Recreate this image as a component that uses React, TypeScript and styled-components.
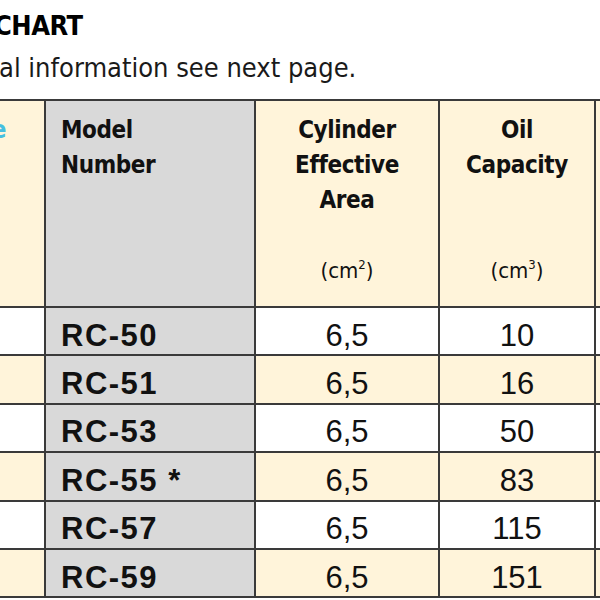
import React from "react"
import styled, { createGlobalStyle } from "styled-components"

const rows = [
    { model: "RC-50", area: "6,5", oil: "10" },
    { model: "RC-51", area: "6,5", oil: "16" },
    { model: "RC-53", area: "6,5", oil: "50" },
    { model: "RC-55 *", area: "6,5", oil: "83" },
    { model: "RC-57", area: "6,5", oil: "115" },
    { model: "RC-59", area: "6,5", oil: "151" },
]

export default function App() {
    return <>
        <Global />
        <Page>
            <Title>CHART</Title>
            <Note>al information see next page.</Note>
            <Table>
                <colgroup>
                    <col style={{ width: 120 }} />
                    <col style={{ width: 210 }} />
                    <col style={{ width: 184 }} />
                    <col style={{ width: 156 }} />
                    <col style={{ width: 120 }} />
                </colgroup>
                <thead>
                    <tr>
                        <Head $align="right"><Cut>e</Cut></Head>
                        <Head $grey $align="left">Model<br />Number</Head>
                        <Head>Cylinder<br />Effective<br />Area<br /><br /><Unit>(cm<sup>2</sup>)</Unit></Head>
                        <Head>Oil<br />Capacity<br /><br /><br /><Unit>(cm<sup>3</sup>)</Unit></Head>
                        <Head />
                    </tr>
                </thead>
                <tbody>
                    {rows.map((r, i) => <Row key={r.model} $shade={i % 2 === 1}>
                        <Cell />
                        <Model>{r.model}</Model>
                        <Cell>{r.area}</Cell>
                        <Cell>{r.oil}</Cell>
                        <Cell />
                    </Row>)}
                </tbody>
            </Table>
        </Page>
    </>
}

const condensed = `"Liberation Sans Narrow", "DejaVu Sans Condensed", "Liberation Sans", sans-serif`

const Global = createGlobalStyle`
  body {
    margin: 0;
    background: #fff;
    overflow: hidden;
  }
`
const Page = styled.div`
  width: 600px;
  height: 600px;
  overflow: hidden;
  font-family: "Liberation Sans", Arial, sans-serif;
  color: #111;
`
const Title = styled.h1`
  margin: 0 0 0 -6px;
  padding-top: 11px;
  font-family: ${condensed};
  font-stretch: condensed;
  font-size: 27px;
  line-height: 30px;
  font-weight: 900;
  letter-spacing: -0.5px;
  color: #000;
`
const Note = styled.p`
  margin: 11px 0 0 -1px;
  font-family: ${condensed};
  font-stretch: condensed;
  font-size: 27px;
  line-height: 32px;
  color: #1a1a1a;
`
const Table = styled.table`
  margin: 15px 0 0 -76px;
  border-collapse: collapse;
  table-layout: fixed;
  width: 790px;
`
const Head = styled.th<{ $grey?: boolean; $align?: string }>`
  height: 193px;
  padding: 12px 15px 0;
  vertical-align: top;
  text-align: ${p => p.$align || "center"};
  background: ${p => p.$grey ? "#d9d9d9" : "#fff4da"};
  border: 2px solid #3a3a3a;
  font-family: ${condensed};
  font-stretch: condensed;
  font-size: 24px;
  line-height: 35px;
  font-weight: bold;
  letter-spacing: -0.4px;
`
const Cut = styled.span`
  color: #46bfe0;
  margin-right: 23px;
`
const Unit = styled.span`
  font-weight: normal;
  font-size: 22px;
  letter-spacing: 0;

  sup {
    font-size: 13px;
    vertical-align: 9px;
    line-height: 0;
  }
`
const Row = styled.tr<{ $shade: boolean }>`
  height: 48.4px;
  background: ${p => p.$shade ? "#fff4da" : "#fff"};
`
const Cell = styled.td`
  padding: 8px 0 0;
  text-align: center;
  border: 2px solid #3a3a3a;
  font-size: 31px;
  line-height: 37px;
`
const Model = styled(Cell)`
  text-align: left;
  padding-left: 15px;
  background: #d9d9d9;
  font-weight: bold;
  letter-spacing: 1.5px;
`
